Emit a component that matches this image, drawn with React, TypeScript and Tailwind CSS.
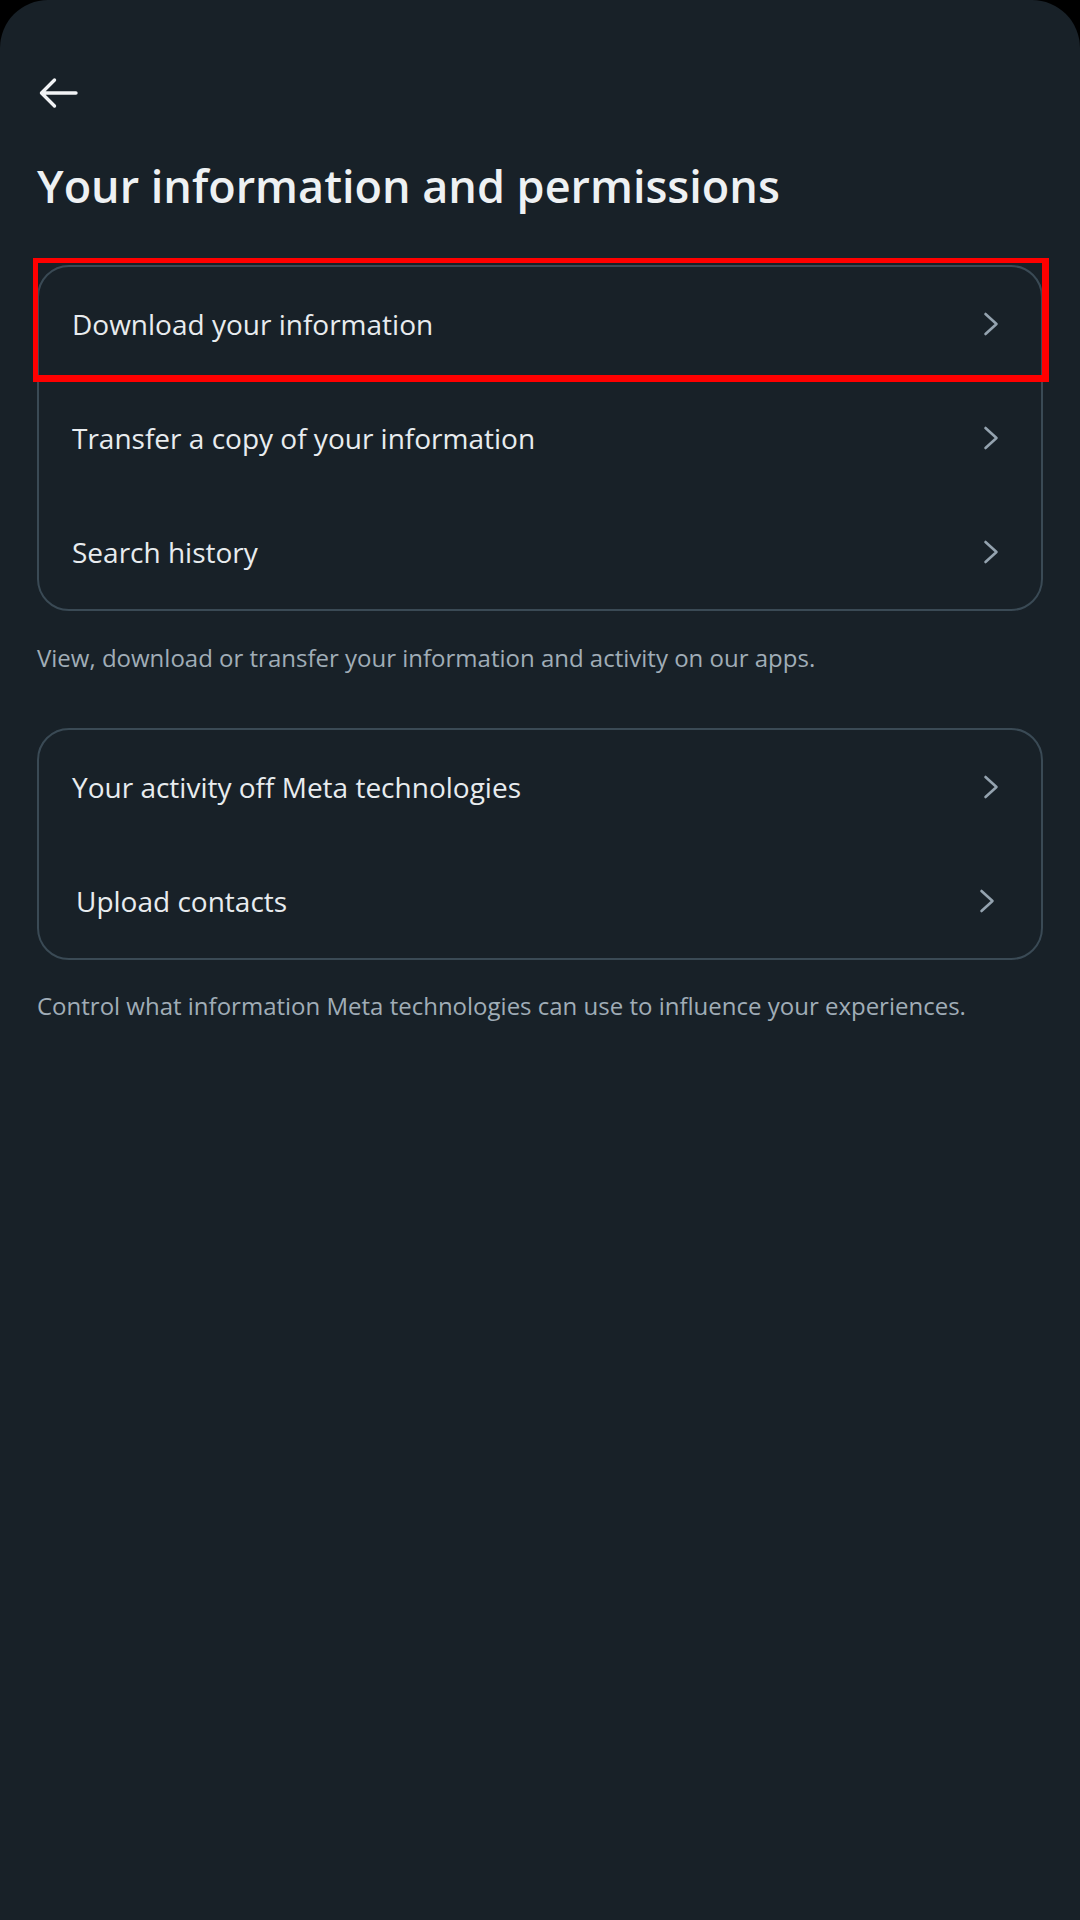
import React from "react";

const Chevron = () => (
  <svg width="20" height="28" viewBox="0 0 20 28" fill="none" className="shrink-0">
    <path d="M4.5 4 L15.5 14 L4.5 24" stroke="#94a3af" strokeWidth="2.6" strokeLinecap="round" strokeLinejoin="round" />
  </svg>
);

type RowProps = { label: string; shift?: boolean };

const Row = ({ label, shift }: RowProps) => (
  <div
    className={
      shift
        ? "flex h-[114px] items-center justify-between pl-[37px] pr-[44px]"
        : "flex h-[114px] items-center justify-between pl-[33px] pr-[40px]"
    }
  >
    <span className="text-[28px] leading-[36px] text-[#e8ecef]">{label}</span>
    <Chevron />
  </div>
);

export default function App() {
  return (
    <div className="w-[1080px] min-h-[1920px] bg-black" style={{ fontFamily: "'Open Sans', Roboto, sans-serif" }}>
      <div className="relative min-h-[1920px] rounded-t-[48px] bg-[#182128] px-[37px] pt-[77px]">
        <svg width="40" height="32" viewBox="0 0 40 32" fill="none" className="ml-[1px]">
          <path d="M3.5 16 H38 M3.5 16 L16.5 3 M3.5 16 L16.5 29" stroke="#f1f3f5" strokeWidth="3.4" strokeLinecap="round" strokeLinejoin="round" />
        </svg>

        <h1 className="mt-[50px] text-[45px] leading-[54px] font-semibold text-[#eef1f3]">
          Your information and permissions
        </h1>

        <div className="mt-[52px] rounded-[32px] border-2 border-[#3a4a55]">
          <Row label="Download your information" />
          <Row label="Transfer a copy of your information" />
          <Row label="Search history" />
        </div>

        <p className="mt-[31px] text-[24px] leading-[32px] text-[#a0adb7]">
          View, download or transfer your information and activity on our apps.
        </p>

        <div className="mt-[54px] rounded-[32px] border-2 border-[#3a4a55]">
          <Row label="Your activity off Meta technologies" />
          <Row label="Upload contacts" shift />
        </div>

        <p className="mt-[30px] text-[24px] leading-[32px] text-[#a0adb7]">
          Control what information Meta technologies can use to influence your experiences.
        </p>

        <div className="pointer-events-none absolute left-[33px] top-[258px] h-[124px] w-[1016px] border-[5px] border-r-[7px] border-b-[7px] border-[#ff0000]" />
      </div>
    </div>
  );
}
